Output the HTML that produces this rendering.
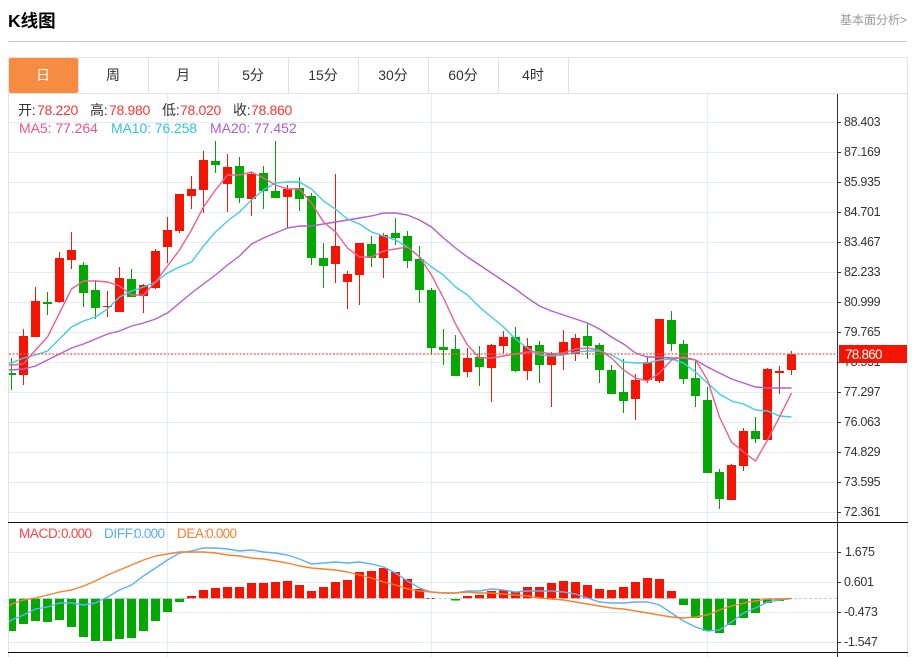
<!DOCTYPE html>
<html lang="zh"><head><meta charset="utf-8"><title>K线图</title>
<style>
html,body{margin:0;padding:0;background:#fff;width:914px;height:657px;overflow:hidden}
svg{display:block}
text{font-family:"Liberation Sans","Noto Sans CJK SC",sans-serif}
</style></head><body>
<svg width="914" height="657" viewBox="0 0 914 657" xmlns="http://www.w3.org/2000/svg">
<rect width="914" height="657" fill="#fff"/>
<text x="8" y="27" font-size="17.5" font-weight="bold" fill="#000">K线图</text>
<text x="840" y="24" font-size="12" fill="#999">基本面分析&gt;</text>
<path d="M8 41.5H907" stroke="#ccc" fill="none"/>
<!-- frame -->
<path d="M8.5 57V657M907.5 57V657M8 57.5H908M8 93.5H908" stroke="#e2e2e2" fill="none"/>
<path d="M78.5 58V93M148.5 58V93M218.5 58V93M288.5 58V93M358.5 58V93M428.5 58V93M498.5 58V93M568.5 58V93" stroke="#e0e0e0" fill="none"/>
<rect x="9" y="58" width="69" height="35" rx="2" fill="#f58c42"/>
<g font-size="14" text-anchor="middle" fill="#333">
<text x="43" y="80" fill="#fff">日</text>
<text x="113" y="80">周</text>
<text x="183" y="80">月</text>
<text x="253" y="80">5分</text>
<text x="323" y="80">15分</text>
<text x="393" y="80">30分</text>
<text x="463" y="80">60分</text>
<text x="533" y="80">4时</text>
</g>
<!-- grid -->
<path d="M9 122.5H837M9 152.5H837M9 182.5H837M9 212.5H837M9 242.5H837M9 272.5H837M9 302.5H837M9 332.5H837M9 362.5H837M9 392.5H837M9 422.5H837M9 452.5H837M9 482.5H837M9 512.5H837M9 552.5H837M9 582.5H837M9 612.5H837M9 642.5H837M167.5 94V657M431.5 94V657M707.5 94V657" stroke="#e3ecf3" fill="none"/>
<!-- red wicks -->
<path stroke="#f01a0a" fill="none" d="M23.5 329V385M35.5 287V337M59.5 252V303M71.5 232V269M107.5 291V317M119.5 267V312M143.5 284V313M155.5 249V289M167.5 217V263M179.5 194V233M191.5 176V209M203.5 151V213M227.5 154V212M251.5 172V216M287.5 185V228M335.5 174V283M347.5 271V309M359.5 243V305M383.5 233V278M467.5 348V377M491.5 344V402M503.5 331V353M527.5 338V380M551.5 352V407M563.5 330V370M575.5 334V361M635.5 374V420M647.5 356V383M659.5 319V383M731.5 464V500M743.5 428V471M767.5 368V441M779.5 366V394M791.5 351V375"/>
<!-- green wicks -->
<path stroke="#0a9a0a" fill="none" d="M11.5 358V390M47.5 292V315M83.5 262V307M95.5 280V319M131.5 269V297M215.5 141V173M239.5 157V203M263.5 166V209M275.5 141V198M299.5 177V211M311.5 193V265M323.5 243V288M371.5 236V267M395.5 218V245M407.5 231V268M419.5 246V303M431.5 288V355M443.5 329V365M455.5 335V376M479.5 346V386M515.5 327V372M539.5 341V383M587.5 323V359M599.5 343V383M611.5 365V394M623.5 359V413M671.5 311V351M683.5 340V384M695.5 360V407M707.5 387V473M719.5 469V509M755.5 417V443"/>
<!-- red bodies -->
<path fill="#f31502" d="M19 336h9V375h-9zM31 301h9V337h-9zM55 258h9V302h-9zM67 250h9V260h-9zM103 306h9V307h-9zM115 278h9V312h-9zM139 285h9V296h-9zM151 251h9V288h-9zM163 230h9V247h-9zM175 194h9V231h-9zM187 189h9V196h-9zM199 160h9V190h-9zM223 167h9V184h-9zM247 174h9V199h-9zM283 189h9V197h-9zM331 246h9V264h-9zM343 274h9V282h-9zM355 243h9V275h-9zM379 235h9V258h-9zM463 358h9V372h-9zM487 345h9V368h-9zM499 337h9V346h-9zM523 346h9V371h-9zM547 354h9V365h-9zM559 342h9V355h-9zM571 338h9V354h-9zM631 380h9V399h-9zM643 362h9V380h-9zM655 319h9V381h-9zM727 465h9V500h-9zM739 431h9V466h-9zM763 369h9V440h-9zM775 371h9V373h-9zM787 354h9V370h-9z"/>
<!-- green bodies -->
<path fill="#03a803" d="M9 373h7V375h-7zM43 302h9V304h-9zM79 265h9V293h-9zM91 290h9V308h-9zM127 279h9V297h-9zM211 161h9V165h-9zM235 166h9V198h-9zM259 173h9V191h-9zM271 191h9V198h-9zM295 188h9V199h-9zM307 196h9V258h-9zM319 258h9V266h-9zM367 244h9V258h-9zM391 233h9V238h-9zM403 236h9V261h-9zM415 259h9V290h-9zM427 290h9V348h-9zM439 347h9V350h-9zM451 349h9V376h-9zM475 357h9V367h-9zM511 337h9V371h-9zM535 345h9V365h-9zM583 336h9V346h-9zM595 345h9V370h-9zM607 370h9V394h-9zM619 392h9V401h-9zM667 320h9V344h-9zM679 344h9V379h-9zM691 378h9V396h-9zM703 400h9V473h-9zM715 472h9V499h-9zM751 431h9V439h-9z"/>
<!-- MA20 -->
<polyline fill="none" stroke="#b45fca" stroke-width="1.4" points="9,370 11.5,370 23.5,369 35.5,366 47.5,360 59.5,354 71.5,348 83.5,344 95.5,339 107.5,334 119.5,331 131.5,326 143.5,323 155.5,319 167.5,313 179.5,303 191.5,293 203.5,284 215.5,275 227.5,265 239.5,256 251.5,244 263.5,238 275.5,233 287.5,228 299.5,226 311.5,226 323.5,224 335.5,222 347.5,220 359.5,218 371.5,216 383.5,213 395.5,213 407.5,215 419.5,220 431.5,227 443.5,238 455.5,248 467.5,257 479.5,265 491.5,273 503.5,281 515.5,289 527.5,298 539.5,306 551.5,311 563.5,315 575.5,319 587.5,323 599.5,329 611.5,337 623.5,344 635.5,353 647.5,357 659.5,357 671.5,358 683.5,358 695.5,360 707.5,367 719.5,373 731.5,379 743.5,383 755.5,387 767.5,388 779.5,388 791.5,388"/>
<!-- MA10 -->
<polyline fill="none" stroke="#3ecde2" stroke-width="1.4" points="9,363 11.5,363 23.5,358 35.5,355 47.5,351 59.5,339 71.5,327 83.5,321 95.5,317 107.5,309 119.5,297 131.5,291 143.5,287 155.5,282 167.5,273 179.5,267 191.5,262 203.5,246 215.5,232 227.5,221 239.5,212 251.5,200 263.5,190 275.5,183 287.5,182 299.5,182 311.5,189 323.5,201 335.5,209 347.5,219 359.5,224 371.5,232 383.5,236 395.5,240 407.5,247 419.5,257 431.5,267 443.5,275 455.5,287 467.5,295 479.5,307 491.5,317 503.5,327 515.5,339 527.5,348 539.5,355 551.5,356 563.5,355 575.5,352 587.5,351 599.5,351 611.5,355 623.5,362 635.5,363 647.5,363 659.5,360 671.5,359 683.5,363 695.5,372 707.5,383 719.5,394 731.5,401 743.5,404 755.5,410 767.5,411 779.5,416 791.5,417"/>
<!-- MA5 -->
<polyline fill="none" stroke="#ee5f8f" stroke-width="1.4" points="9,365 11.5,365 23.5,364 35.5,350 47.5,337 59.5,313 71.5,289 83.5,281 95.5,281 107.5,282 119.5,286 131.5,295 143.5,295 155.5,282 167.5,266 179.5,250 191.5,230 203.5,207 215.5,190 227.5,175 239.5,175 251.5,172 263.5,178 275.5,185 287.5,189 299.5,189 311.5,203 323.5,222 335.5,232 347.5,248 359.5,257 371.5,257 383.5,251 395.5,249 407.5,247 419.5,257 431.5,275 443.5,298 455.5,324 467.5,345 479.5,358 491.5,358 503.5,356 515.5,354 527.5,352 539.5,352 551.5,354 563.5,353 575.5,349 587.5,348 599.5,350 611.5,358 623.5,370 635.5,378 647.5,381 659.5,373 671.5,360 683.5,357 695.5,360 707.5,380 719.5,417 731.5,442 743.5,452 755.5,461 767.5,440 779.5,417 791.5,393"/>
<!-- last price dotted -->
<path d="M9 354H837" stroke="#f55" stroke-opacity=".75" stroke-width="1.8" stroke-dasharray="2 1.6" fill="none"/>
<!-- legend -->
<g font-size="14" letter-spacing="-.3">
<text x="18" y="115" fill="#333">开:</text><text x="37" y="115" fill="#f33">78.220</text>
<text x="90" y="115" fill="#333">高:</text><text x="109" y="115" fill="#f33">78.980</text>
<text x="162" y="115" fill="#333">低:</text><text x="180" y="115" fill="#f33">78.020</text>
<text x="233" y="115" fill="#333">收:</text><text x="251" y="115" fill="#f33">78.860</text>
<text x="19" y="133" fill="#ec5688" letter-spacing="-.05">MA5: 77.264</text>
<text x="111" y="133" fill="#30c4dc" letter-spacing="-.1">MA10: 76.258</text>
<text x="210" y="133" fill="#b05cc6" letter-spacing="-.05">MA20: 77.452</text>
</g>
<!-- MACD panel -->
<path d="M8 522.5H908M8 652.5H908" stroke="#111" fill="none"/>
<path fill="#f31502" d="M187 596h9V598.5h-9zM199 590h9V598.5h-9zM211 588h9V598.5h-9zM223 587h9V598.5h-9zM235 587h9V598.5h-9zM247 583h9V598.5h-9zM259 583h9V598.5h-9zM271 582h9V598.5h-9zM283 581h9V598.5h-9zM295 585h9V598.5h-9zM307 591h9V598.5h-9zM319 587h9V598.5h-9zM331 582h9V598.5h-9zM343 580h9V598.5h-9zM355 572h9V598.5h-9zM367 571h9V598.5h-9zM379 568h9V598.5h-9zM391 572h9V598.5h-9zM403 579h9V598.5h-9zM415 589h9V598.5h-9zM427 598h9V599h-9zM463 596h9V598.5h-9zM475 595h9V598.5h-9zM487 591h9V598.5h-9zM499 590h9V598.5h-9zM511 592h9V598.5h-9zM523 587h9V598.5h-9zM535 587h9V598.5h-9zM547 583h9V598.5h-9zM559 581h9V598.5h-9zM571 582h9V598.5h-9zM583 585h9V598.5h-9zM595 589h9V598.5h-9zM607 590h9V598.5h-9zM619 587h9V598.5h-9zM631 582h9V598.5h-9zM643 578h9V598.5h-9zM655 579h9V598.5h-9zM667 591h9V598.5h-9z"/>
<path fill="#03a803" d="M9 598.5h7V631h-7zM19 598.5h9V624h-9zM31 598.5h9V621h-9zM43 598.5h9V622h-9zM55 598.5h9V620h-9zM67 598.5h9V627h-9zM79 598.5h9V637h-9zM91 598.5h9V641h-9zM103 598.5h9V641h-9zM115 598.5h9V639h-9zM127 598.5h9V638h-9zM139 598.5h9V631h-9zM151 598.5h9V621h-9zM163 598.5h9V612h-9zM175 598.5h9V602h-9zM451 599h9V600.5h-9zM679 598.5h9V605h-9zM691 598.5h9V618h-9zM703 598.5h9V631h-9zM715 598.5h9V633h-9zM727 598.5h9V625h-9zM739 598.5h9V618h-9zM751 598.5h9V613h-9zM763 598.5h9V603h-9zM775 598.5h9V601h-9z"/>
<path d="M9 598.5H837" stroke="#a8dbe6" stroke-dasharray="3 2" fill="none"/>
<polyline fill="none" stroke="#5fb0f2" stroke-width="1.4" points="9,622 11.5,620 23.5,615 35.5,609 47.5,607 59.5,603 71.5,603 83.5,605 95.5,603 107.5,597 119.5,590 131.5,585 143.5,576 155.5,568 167.5,560 179.5,553 191.5,551 203.5,548 215.5,548 227.5,549 239.5,551 251.5,550 263.5,552 275.5,553 287.5,555 299.5,559 311.5,564 323.5,563 335.5,562 347.5,563 359.5,562 371.5,564 383.5,567 395.5,573 407.5,581 419.5,588 431.5,592 443.5,593 455.5,593 467.5,591 479.5,591 491.5,589 503.5,590 515.5,592 527.5,591 539.5,591 551.5,591 563.5,592 575.5,594 587.5,598 599.5,602 611.5,603 623.5,603 635.5,602 647.5,602 659.5,605 671.5,613 683.5,621 695.5,627 707.5,631 719.5,630 731.5,622 743.5,613 755.5,608 767.5,602 779.5,600 791.5,598.5"/>
<polyline fill="none" stroke="#f6812e" stroke-width="1.4" points="9,606 11.5,604 23.5,600 35.5,598 47.5,595 59.5,592 71.5,590 83.5,586 95.5,581 107.5,575 119.5,570 131.5,565 143.5,560 155.5,556 167.5,554 179.5,552 191.5,552 203.5,552 215.5,553 227.5,555 239.5,556 251.5,558 263.5,559 275.5,561 287.5,563 299.5,566 311.5,568 323.5,569 335.5,570 347.5,572 359.5,575 371.5,578 383.5,582 395.5,585 407.5,589 419.5,591 431.5,592 443.5,593 455.5,593 467.5,592 479.5,593 491.5,593 503.5,594 515.5,595 527.5,596 539.5,598 551.5,599 563.5,600 575.5,602 587.5,604 599.5,606 611.5,608 623.5,609 635.5,611 647.5,613 659.5,615 671.5,617 683.5,618 695.5,617 707.5,615 719.5,610 731.5,606 743.5,603 755.5,601 767.5,599 779.5,599 791.5,598.5"/>
<g font-size="13.5" letter-spacing="-.35">
<text x="19" y="538" fill="#f44">MACD:</text><text x="61" y="538" fill="#f44" letter-spacing="-.7">0.000</text>
<text x="104" y="538" fill="#5aaef0">DIFF:</text><text x="134" y="538" fill="#5aaef0" letter-spacing="-.7">0.000</text>
<text x="177" y="538" fill="#f6802c">DEA:</text><text x="206" y="538" fill="#f6802c" letter-spacing="-.7">0.000</text>
</g>
<!-- axis -->
<path d="M837.5 94V657" stroke="#333" fill="none"/>
<path d="M837 122.5h4M837 152.5h4M837 182.5h4M837 212.5h4M837 242.5h4M837 272.5h4M837 302.5h4M837 332.5h4M837 362.5h4M837 392.5h4M837 422.5h4M837 452.5h4M837 482.5h4M837 512.5h4M837 552.5h4M837 582.5h4M837 612.5h4M837 642.5h4" stroke="#333" fill="none"/>
<g font-size="12.5" fill="#333" letter-spacing="-.33">
<text x="844" y="126">88.403</text>
<text x="844" y="156">87.169</text>
<text x="844" y="186">85.935</text>
<text x="844" y="216">84.701</text>
<text x="844" y="246">83.467</text>
<text x="844" y="276">82.233</text>
<text x="844" y="306">80.999</text>
<text x="844" y="336">79.765</text>
<text x="844" y="366">78.531</text>
<text x="844" y="396">77.297</text>
<text x="844" y="426">76.063</text>
<text x="844" y="456">74.829</text>
<text x="844" y="486">73.595</text>
<text x="844" y="516">72.361</text>
<text x="845" y="556">1.675</text>
<text x="844" y="586">0.601</text>
<text x="844" y="616">-0.473</text>
<text x="844" y="646">-1.547</text>
</g>
<rect x="839" y="345" width="68" height="18" fill="#f31502"/>
<text x="845" y="359" font-size="13.5" fill="#fff" letter-spacing="-.75">78.860</text>
</svg>
</body></html>
